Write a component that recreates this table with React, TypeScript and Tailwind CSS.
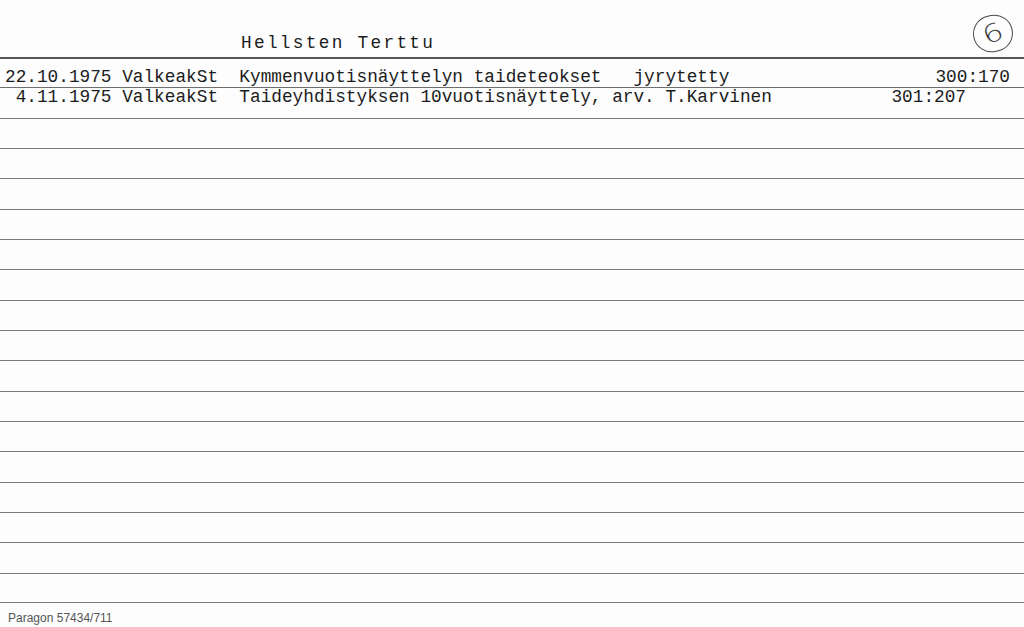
const entries = [
  {
    text: "22.10.1975 ValkeakSt  Kymmenvuotisnäyttelyn taideteokset   jyrytetty",
    page: "300:170",
    pad: "pt-[10px]",
    end: "mr-[14px]",
  },
  {
    text: " 4.11.1975 ValkeakSt  Taideyhdistyksen 10vuotisnäyttely, arv. T.Karvinen",
    page: "301:207",
    pad: "pt-[1px]",
    end: "mr-[58px]",
  },
];

const blankRows = Array.from({ length: 16 });

const App = () => {
  return (
    <div className="w-[1024px] h-[627px] bg-[#fdfdfd] overflow-hidden text-[#1c1c1c] font-['Liberation_Mono',monospace]">
      {/* card header */}
      <div className="flex items-start h-[57px]">
        <span className="mt-[35px] pl-[241px] text-[17.75px] leading-none tracking-[2.3px] whitespace-pre">
          Hellsten Terttu
        </span>
        <div className="ml-auto mr-[11px] mt-[15px] w-[40px] h-[37px] rounded-full border-[1.5px] border-[#4a4a4a] flex items-center justify-center -rotate-12">
          <span className="font-['DejaVu_Sans',sans-serif] font-light text-[25px] leading-none text-[#3a3a3a] scale-x-125 -rotate-12">
            6
          </span>
        </div>
      </div>

      {/* typed rows */}
      {entries.map((row, i) => (
        <div
          key={i}
          className={`flex items-start h-[30.33px] pl-[5px] text-[17.75px] leading-none ${row.pad} ${
            i === 0 ? "border-t-2 border-[#555]" : "border-t border-[#6e6e6e]"
          }`}
        >
          <span className="whitespace-pre">{row.text}</span>
          <span className={`ml-auto ${row.end}`}>{row.page}</span>
        </div>
      ))}

      {/* empty ruled lines */}
      {blankRows.map((_, i) => (
        <div
          key={i}
          className={`h-[30.33px] border-t border-[#787878] ${i === blankRows.length - 1 ? "border-b" : ""}`}
        />
      ))}

      <div className="pl-[8px] pt-[9px] font-['Liberation_Sans',Arial,sans-serif] text-[12px] leading-none text-[#555]">
        Paragon 57434/711
      </div>
    </div>
  );
};

export default App;
